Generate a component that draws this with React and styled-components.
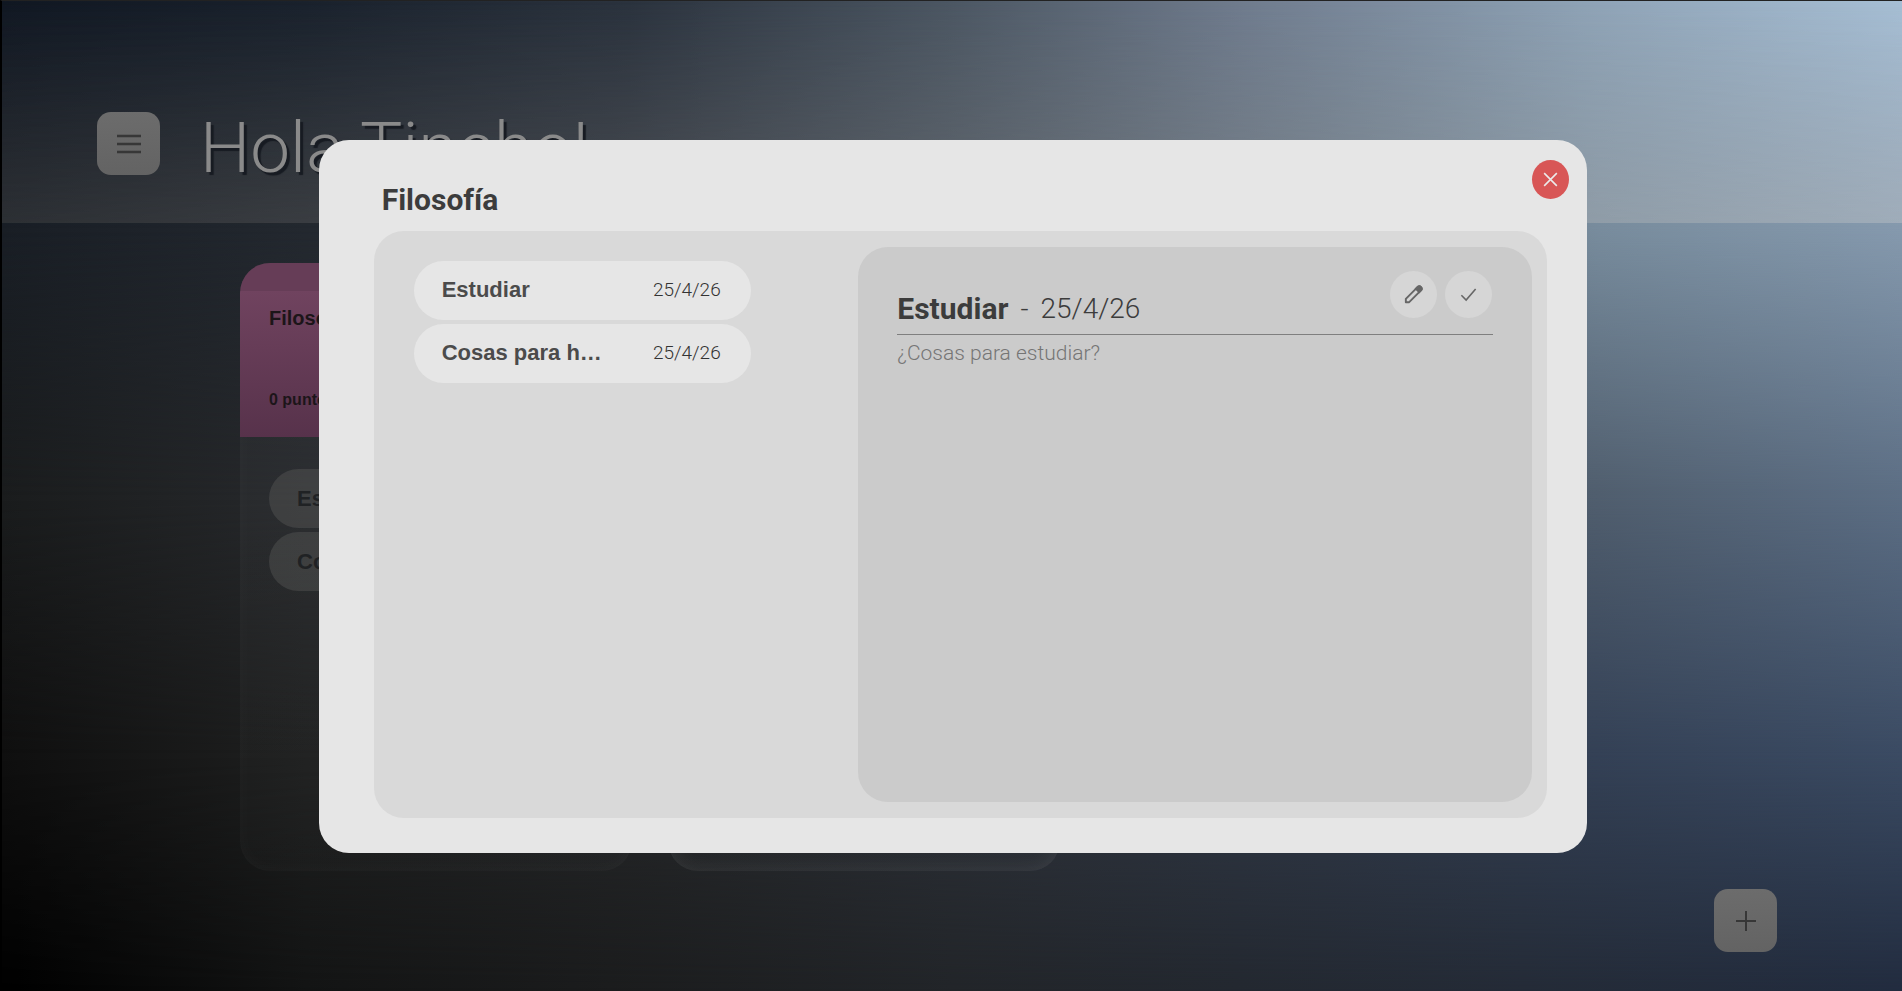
import React from "react";
import styled, { createGlobalStyle } from "styled-components";

const GlobalStyle = createGlobalStyle`
  * { box-sizing: border-box; }
  html, body, #root { height: 100%; }
  body { margin: 0; background: #000; font-family: "Liberation Sans", Arial, sans-serif; }
  button { font: inherit; border: 0; padding: 0; cursor: pointer; }
  h1, h2, h3, p, ul { margin: 0; padding: 0; }
`;

const Page = styled.div`
  position: relative;
  min-height: 100vh;
  display: flex;
  flex-direction: column;
  overflow: hidden;
  isolation: isolate;
  border-top: 1px solid #222;
  border-left: 2px solid #000;
`;

const SkyBand = styled.div`
  position: absolute;
  inset: 0;
  z-index: -1;
  background: linear-gradient(90deg, ${(p) => p.$colors});
  mask-image: linear-gradient(#000 ${(p) => p.$from}, ${(p) => p.$last ? "#000" : "transparent"} ${(p) => p.$to});
`;

const Header = styled.header`
  position: relative;
  display: flex;
  align-items: flex-start;
  gap: 40px;
  height: 222px;
  padding: 111px 95px 0;
  &::before {
    content: "";
    position: absolute;
    inset: 0;
    z-index: -1;
    background: linear-gradient(90deg, #515151, #d0d0d0);
    mask-image: linear-gradient(transparent, rgba(0, 0, 0, 0.35));
  }
`;

const SquareButton = styled.button`
  width: 63px;
  height: 63px;
  flex: none;
  display: grid;
  place-items: center;
  border-radius: 14px;
  color: #373737;
  background: linear-gradient(#6c6c6c, #636363);
`;

const Greeting = styled.h1`
  font: 300 71px/72px Roboto, sans-serif;
  color: #8a8a8a;
  text-shadow: 3px 3px 1px #171b22;
`;

const Board = styled.main`
  flex: 1;
  display: flex;
  gap: 36px;
  padding: 40px 238px 120px;
`;

const Card = styled.section`
  width: 392px;
  display: flex;
  flex-direction: column;
  border-radius: 30px;
  overflow: hidden;
  background: linear-gradient(rgba(255, 255, 255, 0.03), rgba(255, 255, 255, 0.01));
  box-shadow: inset 0 0 20px rgba(255, 255, 255, ${(p) => p.$glow});
`;

const CardHead = styled.div`
  height: 174px;
  display: flex;
  flex-direction: column;
  justify-content: space-between;
  padding: 15px 29px 27px;
  border-top: 28px solid #663d57;
  background: linear-gradient(#70435f, #57324b) padding-box;
  color: #1c1519;
  h2 { font-size: 20px; line-height: 24px; }
  p { font-size: 16px; line-height: 20px; font-weight: 700; }
`;

const TaskList = styled.ul`
  list-style: none;
  display: flex;
  flex-direction: column;
  gap: 4px;
`;

const CardTasks = styled(TaskList)`
  padding: 32px 29px;
`;

const Task = styled.button`
  width: 100%;
  height: 59px;
  display: flex;
  align-items: center;
  justify-content: space-between;
  padding: 0 30px 0 28px;
  border-radius: 30px;
  background: ${(p) => (p.$dim ? "rgba(110, 108, 106, 0.3)" : "#e6e6e6")};
  color: ${(p) => (p.$dim ? "#202224" : "#4b4b4b")};
`;

const TaskName = styled.span`
  width: 164px;
  overflow: hidden;
  white-space: nowrap;
  text-overflow: ellipsis;
  text-align: left;
  font-size: 22px;
  font-weight: 700;
`;

const TaskDate = styled.time`
  font: 300 19px/24px Roboto, sans-serif;
  color: #333;
`;

const Footer = styled.div`
  position: absolute;
  right: 125px;
  bottom: 39px;
`;

const Overlay = styled.div`
  position: fixed;
  inset: 0;
  display: flex;
  align-items: center;
  justify-content: center;
  padding: 2px 0 0 4px;
`;

const Dialog = styled.section`
  position: relative;
  width: 66.7vw;
  height: 72vh;
  display: flex;
  flex-direction: column;
  gap: 14px;
  padding: 42px 40px 35px 55px;
  border-radius: 30px;
  background: #e6e6e6;
  color: #3c3c3c;
`;

const DialogTitle = styled.h2`
  padding-left: 8px;
  font: 700 30px/35px Roboto, sans-serif;
`;

const CloseButton = styled.button`
  position: absolute;
  top: 20px;
  right: 18px;
  width: 37px;
  height: 39px;
  display: grid;
  place-items: center;
  border-radius: 50%;
  background: #d85656;
  color: #ebebeb;
`;

const DialogBody = styled.div`
  flex: 1;
  display: grid;
  grid-template-columns: 1fr 674px;
  padding: 16px 15px 16px 0;
  border-radius: 30px;
  background: #d9d9d9;
`;

const DialogTasks = styled(TaskList)`
  width: 337px;
  margin: 14px 0 0 40px;
`;

const Detail = styled.article`
  padding: 24px 39px;
  border-radius: 30px;
  background: #cbcbcb;
`;

const DetailHead = styled.header`
  display: flex;
  justify-content: space-between;
  height: 64px;
  border-bottom: 1px solid #7f7f7f;
`;

const DetailTitle = styled.h3`
  display: flex;
  align-items: flex-end;
  gap: 12px;
  padding-bottom: 9px;
  font: 700 30px/32px Roboto, sans-serif;
  span, time { font-size: 28px; font-weight: 300; }
`;

const Actions = styled.div`
  display: flex;
  gap: 8px;
  padding-right: 1px;
`;

const RoundButton = styled.button`
  width: 47px;
  height: 47px;
  display: grid;
  place-items: center;
  border-radius: 50%;
  background: #d6d6d6;
  color: #666;
`;

const Note = styled.p`
  padding-top: 5px;
  font: 300 21px/26px Roboto, sans-serif;
  color: #757575;
`;

const Icon = ({ size, stroke = 2, children }) => (
  <svg width={size} height={size} viewBox="0 0 24 24" fill="none" stroke="currentColor" strokeWidth={stroke} aria-hidden="true">
    {children}
  </svg>
);

const sky = [
  { from: "0%", to: "100%", last: true, colors: "#000, #131414 16%, #1b1c1d 32%, #222529 50%, #242b37 80%, #222c3f" },
  { from: "76%", to: "100%", colors: "#0f0f0f, #1f2020 16%, #26282a 35%, #2e333c 55%, #344156 84%, #3b4b63" },
  { from: "50%", to: "76%", colors: "#1a1c1d, #27292c 16%, #303741 40%, #505e6e 84%, #5c6e84" },
  { from: "23%", to: "50%", colors: "#191e25, #23282f 16%, #2d333c 32%, #4d5864 55%, #788c9d 84%, #8599ad" },
  { from: "0%", to: "23%", colors: "#111823, #1a222d 16%, #2b333e 33%, #4c5763 50%, #6f7b8d 65%, #8ea2b5 83%, #a6bed4" },
];

const tasks = [
  { name: "Estudiar", date: "25/4/26" },
  { name: "Cosas para hacer", date: "25/4/26" },
];

const TaskItems = ({ dim }) =>
  tasks.map((task) => (
    <li key={task.name}>
      <Task type="button" $dim={dim}>
        <TaskName>{task.name}</TaskName>
        <TaskDate>{task.date}</TaskDate>
      </Task>
    </li>
  ));

export default function App() {
  return (
    <>
      <GlobalStyle />
      <Page>
        {sky.map((band) => (
          <SkyBand key={band.from + band.to} $from={band.from} $to={band.to} $last={band.last} $colors={band.colors} />
        ))}
        <Header>
          <SquareButton type="button" aria-label="Menú">
            <Icon size={32}><path d="M3 6h18M3 12h18M3 18h18" /></Icon>
          </SquareButton>
          <Greeting>Hola Tincho!</Greeting>
        </Header>
        <Board>
          <Card $glow={0.03}>
            <CardHead>
              <h2>Filosofía</h2>
              <p>0 puntos</p>
            </CardHead>
            <CardTasks><TaskItems dim /></CardTasks>
          </Card>
          <Card $glow={0.09} />
        </Board>
        <Footer>
          <SquareButton type="button" aria-label="Agregar">
            <Icon size={24}><path d="M12 2v20M2 12h20" /></Icon>
          </SquareButton>
        </Footer>
      </Page>
      <Overlay>
        <Dialog role="dialog" aria-labelledby="subject">
          <DialogTitle id="subject">Filosofía</DialogTitle>
          <CloseButton type="button" aria-label="Cerrar">
            <Icon size={19} stroke={2}><path d="M4 4l16 16M20 4L4 20" /></Icon>
          </CloseButton>
          <DialogBody>
            <DialogTasks><TaskItems /></DialogTasks>
            <Detail>
              <DetailHead>
                <DetailTitle>
                  Estudiar <span>-</span> <time>25/4/26</time>
                </DetailTitle>
                <Actions>
                  <RoundButton type="button" aria-label="Editar">
                    <Icon size={23}>
                      <path d="M4 20v-3.500L16.500 4a2.500 2.500 0 0 1 3.500 3.500L7.500 20z" strokeLinejoin="round" />
                      <path d="M14.500 6L18 9.500l2-2a2.500 2.500 0 0 0-3.500-3.500z" fill="currentColor" />
                    </Icon>
                  </RoundButton>
                  <RoundButton type="button" aria-label="Completar">
                    <Icon size={19} stroke={2}><path d="M3 13l6 6L21 5" /></Icon>
                  </RoundButton>
                </Actions>
              </DetailHead>
              <Note>¿Cosas para estudiar?</Note>
            </Detail>
          </DialogBody>
        </Dialog>
      </Overlay>
    </>
  );
}
